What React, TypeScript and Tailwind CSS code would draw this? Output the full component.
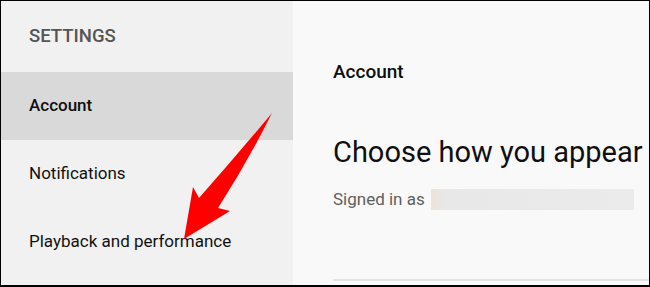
// Settings page screenshot: sidebar nav + account panel, red callout arrow on top
const NAV = ['Account', 'Notifications', 'Playback and performance'];

export default function App() {
  return (
    <div
      className="relative flex w-[650px] h-[287px] overflow-hidden border border-b-2 border-black bg-[#f9f9f9]"
      style={{ fontFamily: 'Roboto, "Liberation Sans", sans-serif' }}
    >
      {/* sidebar */}
      <aside className="w-[292px] shrink-0 bg-[#f1f1f1] flex flex-col">
        <div className="h-[71px] flex items-center pl-[28px] text-[18.5px] font-medium text-[#555]">SETTINGS</div>
        {NAV.map((label, i) => (
          <div
            key={label}
            className={`h-[68px] flex items-center pl-[28px] text-[17px] ${i === 0 ? 'bg-[#d9d9d9] font-medium text-[#0f0f0f]' : 'text-[#111]'}`}
          >
            {label}
          </div>
        ))}
      </aside>

      {/* main panel */}
      <main className="flex-1 flex flex-col pl-[40px] min-w-0">
        <h2 className="pt-[60px] text-[19px] leading-[22px] font-medium text-[#0f0f0f]">Account</h2>
        <h1 className="mt-[50px] text-[29px] leading-[38px] text-[#0f0f0f] whitespace-nowrap">Choose how you appear</h1>
        <div className="mt-[18px] h-[21px] flex items-center gap-[6px] text-[17px] text-[#606060] whitespace-nowrap">
          <span>Signed in as</span>
          <span className="w-[203px] h-[21px] shrink-0 bg-gradient-to-r from-[#eee3d6] from-[0%] via-[#e8e8e8] via-[6%] to-[#ebebeb]" />
        </div>
        <div className="mt-auto mb-[4px] h-[2px] bg-[#e3e3e3]" />
      </main>

      {/* red callout arrow */}
      <svg className="absolute left-0 top-0 pointer-events-none" width="650" height="287" viewBox="0 0 650 287">
        <path d="M271 112 Q246 162 217 207 L229 210 L183 238 L192 186 L198 197 Q236 154 271 112 Z" fill="#ff0000" />
      </svg>
    </div>
  );
}
